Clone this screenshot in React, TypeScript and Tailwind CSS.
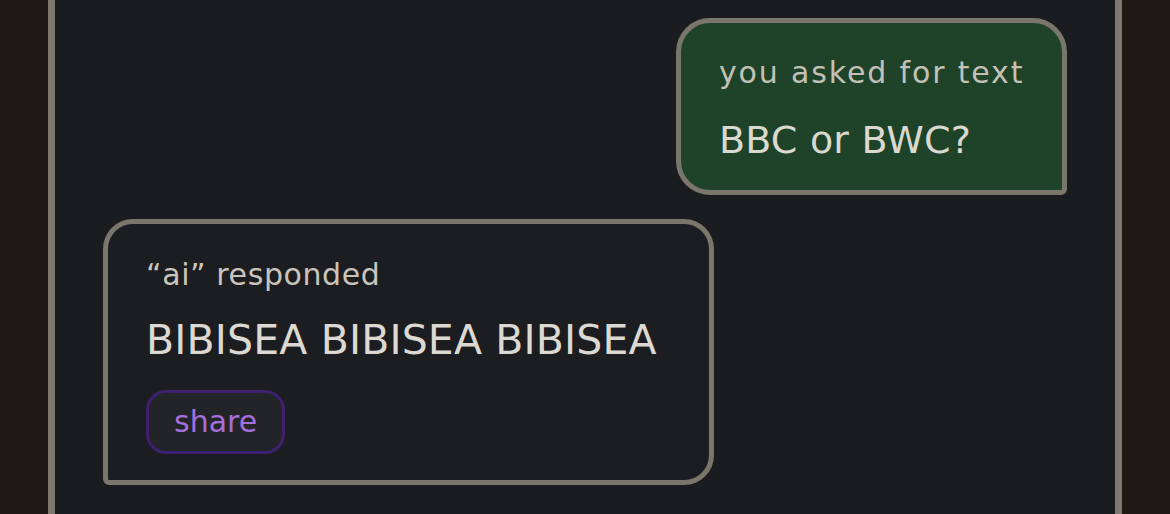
import React from "react";

export default function App() {
  return (
    <div
      className="h-[514px] w-[1170px] overflow-hidden bg-[#1d1a15] px-[48px]"
      style={{ fontFamily: '"DejaVu Sans", "Noto Sans", sans-serif' }}
    >
      <div className="flex h-full flex-col gap-[24px] border-x-[7px] border-[#7e786d] bg-[#1b1c1f] px-[48px] pt-[18px]">
        <div className="self-end w-[391px] rounded-[34px] rounded-br-[6px] border-[5px] border-[#7b766c] bg-[#1e4329] pl-[38px] pr-[20px] pt-[35px] pb-[31px]">
          <div className="text-[30px] leading-[30px] tracking-[1.85px] text-[#c3c1b5]">you asked for text</div>
          <div className="mt-[33px] text-[38px] leading-[38px] tracking-[0.2px] text-[#dbd8cf]">BBC or BWC?</div>
        </div>
        <div className="self-start w-[611px] rounded-[30px] rounded-bl-[6px] border-[5px] border-[#7b766c] bg-[#1c1d20] pl-[38px] pt-[36px] pb-[26px]">
          <div className="text-[30px] leading-[30px] tracking-[0.6px] text-[#c9c5bc]">“ai” responded</div>
          <div className="mt-[30px] text-[41px] leading-[41px] tracking-[0.15px] text-[#dcd9d2]">BIBISEA BIBISEA BIBISEA</div>
          <button className="mt-[29px] rounded-[20px] border-[3px] border-[#3e1f70] bg-[#222427] px-[25px] py-[14px] text-[30px] leading-[30px] text-[#a46fdb]">
            share
          </button>
        </div>
      </div>
    </div>
  );
}
